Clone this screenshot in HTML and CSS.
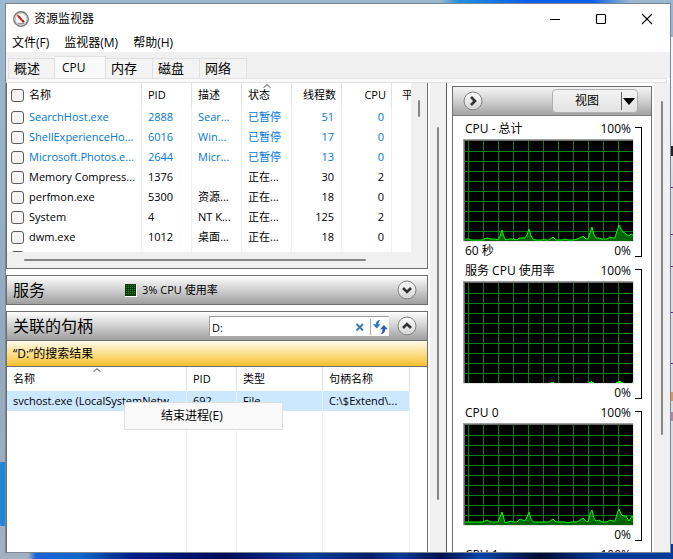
FILE: index.html
```html
<!DOCTYPE html>
<html lang="zh-CN">
<head>
<meta charset="utf-8">
<title>资源监视器</title>
<link rel="stylesheet" href="styles.css">
</head>
<body>
<div class="window">
  <header class="titlebar">
    <svg class="app-icon" viewBox="0 0 16 16" width="16" height="16" aria-hidden="true">
      <circle cx="8" cy="8" r="7.200" fill="#fafafa" stroke="#777" stroke-width="1.400"/>
      <circle cx="8" cy="8" r="5.800" fill="none" stroke="#c4c4c4" stroke-width="1"/>
      <path d="M5 12.400h6" stroke="#999" stroke-width="1.200"/>
      <path d="M4 3.600L7 5l4 5.600-1.400.6L4.600 6z" fill="#d22a20"/>
      <path d="M9.600 9.600l1.600 1.600" stroke="#7a1a14" stroke-width="1.600"/>
    </svg>
    <h1 class="title">资源监视器</h1>
    <button class="caption" aria-label="最小化"><svg viewBox="0 0 12 12" width="12" height="12"><path d="M1 6.5h10" stroke="#000"/></svg></button>
    <button class="caption" aria-label="最大化"><svg viewBox="0 0 12 12" width="12" height="12"><rect x="1.5" y="1.5" width="9" height="9" rx="1" fill="none" stroke="#000" stroke-width="1.2"/></svg></button>
    <button class="caption" aria-label="关闭"><svg viewBox="0 0 12 12" width="12" height="12"><path d="M1 1l10 10M11 1L1 11" stroke="#000" stroke-width="1.1"/></svg></button>
  </header>
  <nav class="menubar">
    <button>文件(F)</button><button>监视器(M)</button><button>帮助(H)</button>
  </nav>
  <div class="tabs" role="tablist">
    <button class="tab" role="tab">概述</button>
    <button class="tab tab-active" role="tab" aria-selected="true">CPU</button>
    <button class="tab" role="tab">内存</button>
    <button class="tab" role="tab">磁盘</button>
    <button class="tab" role="tab">网络</button>
  </div>
  <div class="tab-edge"></div>

  <main class="content">
    <div class="left">
      <section class="processes">
        <div class="list-row">
          <div class="viewport">
            <table class="grid">
              <colgroup><col class="c-name"><col class="c-std"><col class="c-std"><col class="c-std"><col class="c-std"><col class="c-std"><col></colgroup>
              <thead>
                <tr>
                  <th><label><input type="checkbox">名称</label></th><th>PID</th><th>描述</th>
                  <th>状态<svg class="sort" viewBox="0 0 8 4" width="8" height="4"><path d="M.5 3.8L4 .6l3.500 3.200" fill="none" stroke="#444"/></svg></th>
                  <th class="num">线程数</th><th class="num">CPU</th><th class="last">平</th>
                </tr>
              </thead>
              <tbody>
                <tr class="suspended"><td><label><input type="checkbox">SearchHost.exe</label></td><td>2888</td><td>Sear...</td><td>已暂停</td><td class="num">51</td><td class="num">0</td><td></td></tr>
                <tr class="suspended"><td><label><input type="checkbox">ShellExperienceHo...</label></td><td>6016</td><td>Win...</td><td>已暂停</td><td class="num">17</td><td class="num">0</td><td></td></tr>
                <tr class="suspended"><td><label><input type="checkbox">Microsoft.Photos.e...</label></td><td>2644</td><td>Micr...</td><td>已暂停</td><td class="num">13</td><td class="num">0</td><td></td></tr>
                <tr><td><label><input type="checkbox">Memory Compress...</label></td><td>1376</td><td></td><td>正在...</td><td class="num">30</td><td class="num">2</td><td></td></tr>
                <tr><td><label><input type="checkbox">perfmon.exe</label></td><td>5300</td><td>资源...</td><td>正在...</td><td class="num">18</td><td class="num">0</td><td></td></tr>
                <tr><td><label><input type="checkbox">System</label></td><td>4</td><td>NT K...</td><td>正在...</td><td class="num">125</td><td class="num">2</td><td></td></tr>
                <tr><td><label><input type="checkbox">dwm.exe</label></td><td>1012</td><td>桌面...</td><td>正在...</td><td class="num">18</td><td class="num">0</td><td></td></tr>
                <tr><td><label><input type="checkbox" aria-label="进程"></label></td><td></td><td></td><td></td><td></td><td></td><td></td></tr>
              </tbody>
            </table>
          </div>
          <div class="vbar vbar-list"><div class="thumb"></div></div>
        </div>
        <div class="hbar"><div class="thumb"></div></div>
      </section>

      <section class="bar">
        <h2>服务</h2>
        <svg class="meter" viewBox="0 0 12 13" width="12" height="13" shape-rendering="crispEdges" aria-hidden="true">
          <rect width="12" height="13" fill="#fff"/><rect width="11" height="12" fill="#0a3a0a"/>
          <path d="M1.500 1v10M3.500 1v10M5.500 1v10M7.500 1v10M9.500 1v10" stroke="#1c8a1c" stroke-dasharray="1 1"/>
        </svg>
        <span class="usage">3% CPU 使用率</span>
        <button class="round" aria-label="展开"><svg viewBox="0 0 20 20" width="20" height="20"><use href="#disc"/><path d="M6 8l4 4 4-4" fill="none" stroke="#333" stroke-width="2.600"/></svg></button>
      </section>

      <section class="handles">
        <div class="bar">
          <h2>关联的句柄</h2>
          <div class="search">
            <input type="text" value="D:" aria-label="搜索句柄">
            <button aria-label="清除"><svg viewBox="0 0 10 10" width="10" height="10"><path d="M1.500 2l6.500 6.500M8 2L1.500 8.500" stroke="#3878a8" stroke-width="1.800"/></svg></button>
            <button class="refresh" aria-label="刷新"><svg viewBox="0 0 16 16" width="16" height="16">
              <path d="M8.400 1C5.500 1 3.800 2.600 3.800 5.200H.8L4.800 9.600 8.600 5.200H6.500C6.500 3.400 7 2 8.400 1z" fill="#2c7cc4"/>
              <path d="M8.600 15c3 0 4.700-1.700 4.700-4.700h2.500L11.900 5.900 8 10.300h2.500c0 2-.4 3.600-1.900 4.700z" fill="#2c5cb0"/>
            </svg></button>
          </div>
          <button class="round" aria-label="折叠"><svg viewBox="0 0 20 20" width="20" height="20"><use href="#disc"/><path d="M6 12l4-4 4 4" fill="none" stroke="#333" stroke-width="2.600"/></svg></button>
        </div>
        <div class="result">“D:”的搜索结果</div>
        <div class="handle-list">
          <table class="grid">
            <colgroup><col class="h-name"><col class="c-std"><col class="h-type"><col class="h-handle"><col></colgroup>
            <thead><tr>
              <th>名称<svg class="sort" viewBox="0 0 8 4" width="8" height="4"><path d="M.5 3.800L4 .6l3.500 3.200" fill="none" stroke="#444"/></svg></th>
              <th>PID</th><th>类型</th><th>句柄名称</th><th class="none"></th>
            </tr></thead>
            <tbody>
              <tr class="selected"><td>svchost.exe (LocalSystemNetw...</td><td>692</td><td>File</td><td>C:\$Extend\...</td><td class="none"></td></tr>
              <tr class="filler"><td></td><td></td><td></td><td></td><td class="none"></td></tr>
            </tbody>
          </table>
          <div class="context" role="menu"><button role="menuitem">结束进程(E)</button></div>
        </div>
      </section>
    </div>
    <div class="vbar vbar-left"><div class="thumb"></div></div>

    <aside class="right">
      <div class="panel">
        <div class="panel-head">
          <button class="round" aria-label="隐藏图表"><svg viewBox="0 0 20 20" width="20" height="20"><use href="#disc"/><path d="M8 6l4 4-4 4" fill="none" stroke="#333" stroke-width="2.600"/></svg></button>
          <div class="split">
            <button class="split-main">视图</button>
            <button class="split-arrow" aria-label="视图选项"><svg viewBox="0 0 12 7" width="12" height="7"><path d="M0 0h12L6 7z"/></svg></button>
          </div>
        </div>
        <div class="charts">
          <figure class="chart">
            <div class="cap"><span>CPU - 总计</span><span>100%</span></div>
            <svg class="plot" viewBox="0 0 171 103" width="171" height="103"><use href="#board"/>
              <path transform="translate(2 2)" class="load" d="M0 98H5L6 99H17L19 98 22 97 26 98H30L33 99 35 95 37 89 39 96 41 99 44 98H49L52 99 54 97H60L62 94 64 88 66 95 68 98 71 99H77L79 98 81 99H84L88 96 91 99H97L100 98 103 99H108L112 98 115 97 118 95 121 98H123L125 92 127 86 129 94 131 97 134 97 137 98H142L145 96 148 97H150L152 90 154 84 156 88 158 91 161 93 164 95 166 93 168 94V100H0z"/>
              <path transform="translate(2 2)" class="trace" d="M0 98H5L6 99H17L19 98 22 97 26 98H30L33 99 35 95 37 89 39 96 41 99 44 98H49L52 99 54 97H60L62 94 64 88 66 95 68 98 71 99H77L79 98 81 99H84L88 96 91 99H97L100 98 103 99H108L112 98 115 97 118 95 121 98H123L125 92 127 86 129 94 131 97 134 97 137 98H142L145 96 148 97H150L152 90 154 84 156 88 158 91 161 93 164 95 166 93 168 94"/>
            </svg>
            <div class="foot"><span>60 秒</span><span>0%</span></div>
          </figure>
          <figure class="chart">
            <div class="cap"><span>服务 CPU 使用率</span><span>100%</span></div>
            <svg class="plot" viewBox="0 0 171 103" width="171" height="103"><use href="#board"/>
              <path transform="translate(2 2)" class="trace" d="M86 99.500h3M124 99.500h5M126 98.500h1M151 99.500h7M153 98.500h3M167 99.500h1"/>
            </svg>
            <div class="foot"><span></span><span>0%</span></div>
          </figure>
          <figure class="chart">
            <div class="cap"><span>CPU 0</span><span>100%</span></div>
            <svg class="plot" viewBox="0 0 171 103" width="171" height="103"><use href="#board"/>
              <path transform="translate(2 2)" class="load" d="M0 97H18L22 95 25 97H33L35 92 37 87 39 94 40 98 46 96 48 97H52L55 94 60 96 62 92 64 87 66 94 68 97H84L88 94 91 97H100L103 98 106 97H112L118 93 121 96 123 97 125 89 127 85 129 93 131 96 134 95 137 97H142L145 95 148 96H150L152 89 154 84 156 89 158 91H161L164 96 167 91 168 93V100H0z"/>
              <path transform="translate(2 2)" class="trace" d="M0 97H18L22 95 25 97H33L35 92 37 87 39 94 40 98 46 96 48 97H52L55 94 60 96 62 92 64 87 66 94 68 97H84L88 94 91 97H100L103 98 106 97H112L118 93 121 96 123 97 125 89 127 85 129 93 131 96 134 95 137 97H142L145 95 148 96H150L152 89 154 84 156 89 158 91H161L164 96 167 91 168 93"/>
            </svg>
            <div class="foot"><span></span><span>0%</span></div>
          </figure>
          <figure class="chart">
            <div class="cap"><span>CPU 1</span><span>100%</span></div>
          </figure>
        </div>
      </div>
    </aside>
    <div class="vbar vbar-right"><div class="thumb"></div></div>
  </main>
</div>
<div class="behind"></div>

<svg class="defs" width="0" height="0" aria-hidden="true">
  <defs>
    <linearGradient id="shine" x1="0" y1="0" x2="0" y2="1"><stop offset="0" stop-color="#fff"/><stop offset="1" stop-color="#d2d2d2"/></linearGradient>
    <circle id="disc" cx="10" cy="10" r="9" fill="url(#shine)" stroke="#808080"/>
    <g id="board">
      <rect width="171" height="103" fill="#e3e3e3"/><rect width="170" height="102" fill="#a0a0a0"/>
      <rect x="1" y="1" width="169" height="101" fill="#696969"/><rect x="2" y="2" width="168" height="100" fill="#000"/>
      <path stroke="#008216" shape-rendering="crispEdges" d="M2 12.500h168M2 22.500h168M2 32.500h168M2 42.500h168M2 52.500h168M2 62.500h168M2 72.500h168M2 82.500h168M2 92.500h168M5.500 2v100M20.500 2v100M35.500 2v100M50.500 2v100M65.500 2v100M80.500 2v100M95.500 2v100M110.500 2v100M125.500 2v100M140.500 2v100M155.500 2v100"/>
    </g>
  </defs>
</svg>
</body>
</html>
```
FILE: styles.css
```css
* { box-sizing: border-box; }

body {
  margin: 0;
  height: 100vh;
  padding: 3px 0 6px 5px;
  display: flex;
  overflow: hidden;
  font: 11px/20px "Open Sans", "Noto Sans CJK SC", sans-serif;
  color: #000;
  background:
    linear-gradient(90deg, transparent, #1f8fe0 10%, #0a5fe8 45%, #0a5fe8 80%, transparent) 440px 0 / 190px 3px no-repeat,
    radial-gradient(ellipse at 100% 50%, #1f86dc 90%, transparent) 0 462px / 5px 64px no-repeat,
    linear-gradient(90deg, #a3b2c1 28px, #1a62d8 36px, #0a68c8 80px, #02208a 130px, #020a5a 225px, #0a3a98 310px, #02206a 370px, #0a3a9a 400px, #02104a 440px, #0a44a8 480px, #000a30 540px, #003a98 600px) 0 100% / 100% 15px no-repeat,
    linear-gradient(#9cb8ce, #93a9bf 60%, #a3b2c1);
}

button {
  margin: 0;
  padding: 0;
  border: 0;
  background: none;
  font: inherit;
  color: inherit;
}

svg { display: block; }
.defs { position: absolute; }

.window {
  flex: 1;
  min-width: 0;
  display: flex;
  flex-direction: column;
  border: 1px solid #7b8790;
  background: #fff;
  overflow: hidden;
}

.behind {
  width: 2px;
  margin: 34px 0 9px;
  background:
    linear-gradient(#222, #222) 0 109px / 2px 10px no-repeat,
    linear-gradient(#7a1fa0, #7a1fa0) 0 150px / 2px 1px no-repeat,
    linear-gradient(#7a1fa0, #7a1fa0) 0 197px / 2px 1px no-repeat,
    linear-gradient(#7a1fa0, #7a1fa0) 0 229px / 2px 1px no-repeat,
    linear-gradient(#7a1fa0, #7a1fa0) 0 275px / 2px 1px no-repeat,
    linear-gradient(#7a1fa0, #7a1fa0) 0 326px / 2px 1px no-repeat,
    linear-gradient(#d09a6a, #d09a6a) 0 355px / 2px 9px no-repeat,
    linear-gradient(#b08a9a, #b08a9a) 0 375px / 2px 9px no-repeat,
    linear-gradient(#f5f5f5 80px, #dcdcdc 140px);
}

/* Title, menu, tabs */
.titlebar {
  height: 29px;
  flex: none;
  display: flex;
  align-items: center;
  padding-left: 7px;
}
.title {
  flex: 1;
  margin: 0 0 0 5px;
  font-size: 12px;
  font-weight: 400;
}
.caption {
  width: 46px;
  height: 28px;
  display: grid;
  place-items: center;
}
.menubar {
  height: 19px;
  flex: none;
  display: flex;
  gap: 15px;
  padding: 0 6px;
  font-size: 12px;
  line-height: 20px;
}
.tabs {
  height: 26px;
  flex: none;
  display: flex;
  align-items: flex-end;
  padding-left: 2px;
  background: #f0f0f0;
  font-size: 13px;
}
.tab {
  width: 47px;
  height: 20px;
  padding-left: 5px;
  border: 1px solid #e0e0e0;
  border-width: 1px 1px 0 0;
  background: #f3f3f3;
  text-align: left;
  line-height: 19px;
}
.tab:first-child { border-left-width: 1px; }
.tab-active {
  width: 51px;
  height: 22px;
  padding-left: 7px;
  background: #f9f9f9;
  font-size: 12px;
}
.tab-edge {
  height: 5px;
  flex: none;
  margin-right: 3px;
  border: 1px solid #e3e3e3;
  background: #f9f9f9;
}

/* Content columns */
.content {
  flex: 1;
  min-height: 0;
  display: grid;
  grid-template-columns: 1fr 16px 208px 16px;
  grid-template-rows: 100%;
  overflow: hidden;
}
.left {
  min-width: 0;
  padding-right: 2px;
  display: flex;
  flex-direction: column;
  gap: 6px;
}
.vbar {
  display: flex;
  background: #f0f0f0;
}
.thumb {
  flex: 1;
  border-radius: 1px;
  background: #858585;
}
.vbar-left { padding: 44px 7px 52px; }
.vbar-right { padding: 18px 7px 117px; }
.vbar-list {
  width: 16px;
  padding: 17px 7px 135px;
}
.hbar {
  height: 16px;
  display: flex;
  padding: 7px 61px 7px 17px;
  background: #f0f0f0;
}

/* Tables */
.processes {
  flex: none;
  border: 1px solid #6e6e6e;
  border-top: 0;
}
.list-row {
  display: flex;
  background: #f0f0f0;
}
.viewport {
  flex: 1;
  height: 169px;
  overflow: hidden;
  background: #fff;
}
.grid {
  width: 100%;
  table-layout: fixed;
  border-collapse: separate;
  border-spacing: 0;
}
.c-name { width: 135px; }
.c-std { width: 50px; }
.h-name { width: 180px; }
.h-type { width: 86px; }
.h-handle { width: 87px; }
.grid th, .grid td {
  height: 20px;
  padding: 0 0 0 6px;
  border-right: 1px solid #e6f1fc;
  font-weight: 400;
  text-align: left;
  white-space: nowrap;
  overflow: hidden;
}
.grid th {
  position: relative;
  height: 24px;
  border-right-color: #e2e2e2;
}
.grid .num {
  padding: 0 7px 0 0;
  text-align: right;
}
.grid th.num { padding-right: 5px; }
.grid .last, .grid td:last-child, .grid .none { border-right: 0; }
.grid th.last { padding-left: 10px; }
.grid tr > :first-child:has(label) { padding-left: 4px; }
.grid label {
  display: flex;
  align-items: center;
  gap: 5px;
}
.grid input {
  appearance: none;
  flex: none;
  width: 13px;
  height: 13px;
  margin: 0;
  border: 1px solid #5c5c5c;
  border-radius: 3px;
  background: #f4f4f4;
}
.suspended { color: #0078d7; }
.sort {
  position: absolute;
  top: 1px;
  left: 50%;
  margin-left: -4px;
}

/* Section bars */
.bar {
  height: 30px;
  flex: none;
  display: flex;
  align-items: center;
  padding: 0 10px 0 6px;
  border: 1px solid #6e6e6e;
  background: linear-gradient(#fdfdfd, #d0d0d0 50%, #9e9e9e);
}
.bar h2 {
  width: 112px;
  margin: 0;
  font-size: 16px;
  font-weight: 400;
}
.usage { margin-left: 5px; }
.round {
  width: 20px;
  height: 20px;
}
.bar .round { margin-left: auto; }
.search {
  width: 180px;
  height: 20px;
  display: flex;
  align-items: center;
  margin-left: auto;
  border: 1px solid #a0a0a0;
  border-width: 1px 0 0 1px;
  background: #fff;
}
.bar .search + .round { margin-left: 8px; }
.search input {
  flex: 1;
  min-width: 0;
  height: 18px;
  padding: 2px 2px 0;
  border: 0;
  outline: 0;
  background: none;
  font: inherit;
}
.search button {
  width: 20px;
  display: grid;
  place-items: center;
}
.search .refresh {
  width: 19px;
  border-left: 1px solid #b0b0b0;
}

/* Associated handles */
.handles {
  flex: 1;
  min-height: 0;
  display: flex;
  flex-direction: column;
}
.result {
  height: 26px;
  flex: none;
  padding-left: 6px;
  border: 1px solid #6e6e6e;
  border-top: 0;
  background: linear-gradient(#fefbee, #fbdf8c 50%, #f8c02c);
  font-size: 12px;
  line-height: 25px;
}
.handle-list {
  position: relative;
  flex: 1;
  min-height: 0;
  display: flex;
  border: 1px solid #6e6e6e;
  border-width: 0 1px;
}
.selected td { background: #cce8ff; }
.grid .selected .none { background: none; }
.grid .filler td { height: auto; }
.context {
  position: absolute;
  top: 35px;
  left: 117px;
  width: 159px;
  height: 28px;
  border: 1px solid #dedede;
  background: #f9f9f9;
  font-size: 12px;
}
.context button {
  width: 100%;
  height: 26px;
  padding-left: 36px;
  text-align: left;
}

/* Chart column */
.right {
  padding: 3px 2px 0 5px;
  border-left: 1px solid #5a5a5a;
}
.panel {
  height: 100%;
  border: 1px solid #6e6e6e;
  border-bottom: 0;
}
.panel-head {
  height: 29px;
  display: flex;
  align-items: center;
  justify-content: space-between;
  padding: 0 13px 0 10px;
  border-bottom: 1px solid #808080;
  background: linear-gradient(#f6f6f6, #d0d0d0 50%, #a2a2a2);
}
.split {
  height: 24px;
  display: flex;
  align-items: center;
  border: 1px solid #b0b0b0;
  border-radius: 4px;
  background: linear-gradient(#f4f4f4, #e2e2e2);
  font-size: 12px;
}
.split-main { width: 68px; }
.split-arrow {
  width: 16px;
  height: 18px;
  padding-left: 1px;
  border-left: 1px solid #606060;
}
.charts {
  padding: 4px 9px 0 10px;
  font-size: 12px;
}
.chart {
  position: relative;
  margin: 0;
}
.chart::after {
  content: "";
  position: absolute;
  top: 7px;
  right: 0;
  width: 6px;
  height: 128px;
  border: 1px solid #000;
  border-left: 0;
}
.cap, .foot {
  display: flex;
  justify-content: space-between;
  padding: 0 11px 0 2px;
  line-height: 18px;
  white-space: nowrap;
}
.cap { height: 19px; }
.foot { height: 20px; }
.load { fill: #006400; }
.trace {
  fill: none;
  stroke: #00ff00;
}
```
